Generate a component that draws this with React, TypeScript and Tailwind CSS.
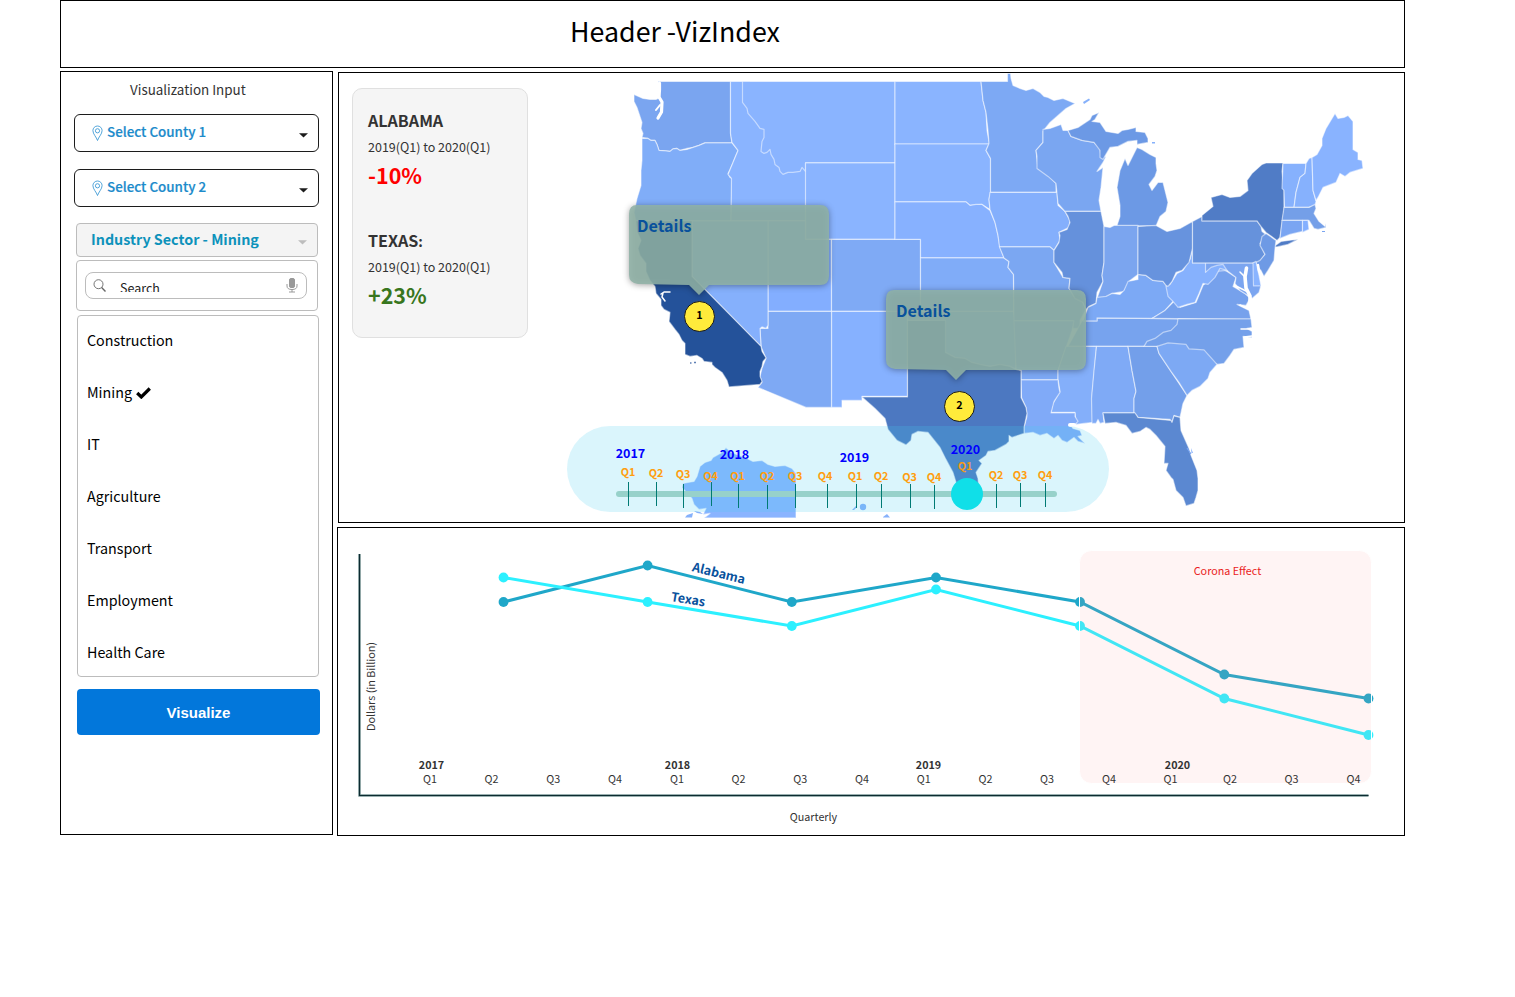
import React from 'react';

const FONT = "font-['Noto_Sans_CJK_SC','Noto_Sans',sans-serif]";

type Region = { id: string; fill: string; d: string };

const REGIONS: Region[] = [
  { id: 'WA', fill: '#7aa5f0', d: 'M658 81H730.500V133L732 142.500H705L699 145L693 147L687 148L680 150L677 148L673 148.500L670 151L666 150.500L659 150L657 144L655 140L651 140L648 138L642 137L643 133L641 128L642 122L639 113L637 107L634 101V94L643 98L650 99L656 99L660 97Z' },
  { id: 'OR', fill: '#80adf8', d: 'M642 138L648 138L651 140L655 140L657 144L659 150L666 150.500L670 151L673 148.500L677 148L680 150L687 149L693 147L699 145L705 142.500H732L738 150L735 157L733 162L730 169L728 173L730 177L732 178L731 220.500H636L634 212L637 198L641 185L641 170L642 160Z' },
  { id: 'ID', fill: '#8ab4ff', d: 'M730.500 81H750V100L790 150L806 162V220.500H731L731.500 178L728 174L733 162L738 150L732 142L730.500 133Z' },
  { id: 'MT', fill: '#8ab4ff', d: 'M742.500 81H895V162.500H805.500V171L802 167L800 171L793 172L788 172L783 174L780 171L779 167L775 164L774 159L771 154L770 149L767 152L764 153L761 151L762 141L764 137L764 129L760 128L755 121L748 113L747 108L742.500 102Z' },
  { id: 'WY', fill: '#8ab4ff', d: 'M805.500 162.500H895V239H805.500Z' },
  { id: 'UT', fill: '#83aeff', d: 'M768 220.500H805.500V239H831.500V311H768Z' },
  { id: 'CO', fill: '#7faaf5', d: 'M831.500 239H920.500V311H831.500Z' },
  { id: 'NM', fill: '#86b1ff', d: 'M831.500 311H907.500V396H862V400H842V407H831.500Z' },
  { id: 'AZ', fill: '#7ea9f4', d: 'M768 311H831.500V407H806L758 387L762 382L760 376L762 368L766 358L761 346L760 328H768Z' },
  { id: 'NV', fill: '#85b0fc', d: 'M692 220.500H768V325L766 328L762 326.500L760 328L761 346L692 276Z' },
  { id: 'CA', fill: '#24529a', d: 'M636 220.500H692V276L761 346L762 351L766 357.500L763 361L762 366L760 371V376L762 381L760 384L729 386.500L727 380L722 372L715 367L712 364V362L704 361L702 358L697 355L690 356L685 354V343L682 340L679 334L675 329L669 321L670 312L664 309L661 305V299L656 293L655 286L650 280L646 271V263L640 255L638 248L641 240L637 231Z' },
  { id: 'ND', fill: '#8ab4ff', d: 'M895 81H981L983 100L986 112L987 130L989.500 144H895Z' },
  { id: 'SD', fill: '#8ab4ff', d: 'M895 143.500H989L986 150L990.500 158V192L989 199L990 209L982 204L970 205L966 201.500H895Z' },
  { id: 'NE', fill: '#87b1ff', d: 'M895 201.500H966L970 205L976 204L982 204L990 210L995 222L998 235L1000 247L1004 257.500H920.500V239H895Z' },
  { id: 'KS', fill: '#80acf8', d: 'M920.500 257.500H1004L1009 261L1008 267L1013.500 274V311H920.500Z' },
  { id: 'OK', fill: '#82aefb', d: 'M907.500 311H1013.500L1016 330V372H930V320H907.500Z' },
  { id: 'MN', fill: '#7da9f4', d: 'M981 81H1007.500V73H1010.500L1011 78L1013 85L1020 88L1026 90L1033 88L1040 92L1044 96L1048 97L1054 100L1063 98L1075 103L1066 108L1058 115L1050 122L1046 127L1043 131V142L1036 150L1038 168L1048 175L1056 183V192H990.500V158L986 150L989 143L988 130L986 112L983 100Z' },
  { id: 'IA', fill: '#84affc', d: 'M990 192H1057L1058 205L1065 211L1070 220L1069 227L1059 232L1060 240L1054 250L1050 246.500H999.500L998 235L995 222L990 209L989 199Z' },
  { id: 'MO', fill: '#7ba7f2', d: 'M999.500 246.500H1050L1054 250V262L1063 277L1070 278L1069 288L1083 302L1086 309L1080 320V328H1073V320.500H1014L1013.500 274L1008 267L1009 261L1004 257.500Z' },
  { id: 'AR', fill: '#7da9f5', d: 'M1014 320.500H1074L1072 330L1065 350L1058 370V379.500H1021V370L1016 369Z' },
  { id: 'WI', fill: '#7aa6f1', d: 'M1043 129L1050 128L1061 124L1063 130L1068 130L1071 136L1082 140L1094 142L1100 148L1101 157L1106 156L1103 162L1097 171L1103 167L1101 187L1099 200L1101 211H1065L1058 203L1056 183L1048 176L1037 168V156L1036 150L1043 142Z' },
  { id: 'IL', fill: '#6591dc', d: 'M1065 211H1101L1104 226V262L1102 275L1103 281L1097 292L1096 303L1089 306L1086 309L1083 302L1075 298L1069 288L1070 278L1063 277L1062 272L1054 262V250L1059 242L1060 235L1059 232L1067 229L1070 222L1068 216Z' },
  { id: 'UP', fill: '#6c99e5', d: 'M1068 130L1078 127L1090 119L1092 115L1099 112L1095 119L1092 121L1100 122L1106 131L1118 133L1122 130L1128 129L1136 127V131L1145 132L1148 138L1148 142L1137 144L1137 140L1128 141L1118 146L1110 147L1103 159L1100 157L1100 150L1094 142L1082 140L1071 136Z' },
  { id: 'MI', fill: '#6c99e5', d: 'M1117 225L1120 216L1120 205L1117 187L1120 170L1125 158L1128 165L1132 157L1137 147L1142 149L1150 154L1156 157L1156 163L1157 170L1155 176L1149 184L1152 190L1158 182L1163 182L1165 190L1168 202L1166 211L1160 216L1156 225.500H1114Z' },
  { id: 'IN', fill: '#7ba5ef', d: 'M1104 226L1110 227L1114 225H1138V274L1130 280L1124 291L1112 293L1106 297L1097 298L1103 281L1102 275L1104 262Z' },
  { id: 'TN', fill: '#77a3ee', d: 'M1082 320.500H1097V317.500L1178 318.500L1185 330L1144 346H1068Z' },
  { id: 'KY', fill: '#7ca9f5', d: 'M1138 274L1146 275L1153 280L1163 281L1167 286L1173 301L1165 310L1152 318L1097 317.500V320.500H1083L1088 307L1096 303L1097 297L1106 296L1112 293L1120 294L1124 290L1128 281L1138 279Z' },
  { id: 'MS', fill: '#84affa', d: 'M1066 346H1096.500L1092 395L1092.500 422L1084 423L1076 424L1075 412H1051L1053 403L1060 391L1058 379V370Z' },
  { id: 'LA', fill: '#80aaf8', d: 'M1021 379.500H1058L1059 388L1060 392L1054 401L1051 412.500H1075V416L1078 421L1075 424L1070 424L1073 428L1080 430L1082 435L1078 436L1085 443L1078 441L1074 437L1067 442L1062 440L1058 435L1054 438L1047 433L1040 435L1033 432L1024 433L1024 427L1027 416L1026 407L1021.500 397Z' },
  { id: 'AL', fill: '#7faaf6', d: 'M1096.500 346H1128L1132 370L1136 391L1134 398V412.500H1103L1104 422L1100 423L1098 419L1096 423L1092 423L1091.500 398L1094 370Z' },
  { id: 'GA', fill: '#739fea', d: 'M1128 346H1157L1159 353L1187 395L1183 403L1180 417L1174 415L1172 422L1170 419L1138 417L1134 412L1134 398L1136 391L1132 370Z' },
  { id: 'VA', fill: '#76a1ec', d: 'M1220 267L1227 271L1236 277L1233 286L1245 293L1250 298L1246 305L1237 304L1249 310L1251 319L1152 318L1165 310L1174 301L1180 307L1196 302L1203 285L1213 277Z' },
  { id: 'NC', fill: '#74a0ea', d: 'M1178 318.500H1251L1252 327L1247 328L1252 331V337L1243 336L1244 347L1234 349L1230 355L1224 363L1217 364L1190 352L1157 346H1144L1147 341L1155 338L1163 332L1171 330L1177 324Z' },
  { id: 'SC', fill: '#7da9f4', d: 'M1157 346L1168 342.500L1186 344L1189 348.500L1204 349.500L1217 364L1210 372L1208 378L1200 386L1192 390L1187 395L1179 382L1171 371L1159 353Z' },
  { id: 'FL', fill: '#5b88d1', d: 'M1103 412.500H1135L1138 417L1171 420L1172 422L1174 415.500L1180 417L1181 430L1189 448L1191 455L1197 470L1198 478L1198 490L1196 497L1194 503L1186 505.500L1183 497L1176 490L1173 479L1171 477L1166 470L1168 463L1164 463L1165 446L1156 435L1150 429L1146 427L1140 431L1132 433L1126 425L1116 422L1105 423Z' },
  { id: 'MD', fill: '#7ba5f0', d: 'M1205 262.500H1257L1254 285H1261L1259 292L1252 298L1248 295L1240 290L1235 283L1236 277L1227 270L1205 272Z' },
  { id: 'WV', fill: '#86b1fd', d: 'M1192.500 248V262.500H1205.500V272L1211 267L1217 265L1223 264L1227 270L1220 268L1215 277L1208 284L1203 283L1199 293L1195 302L1187 304L1178 307L1173 301L1168 296L1166 286L1170 284L1172 281L1177 273L1183 270L1190 259Z' },
  { id: 'OH', fill: '#6793de', d: 'M1138 226L1156 225L1167 231L1180 228L1192.500 221V248L1189 262L1182 270L1176 272L1172 281L1168 286L1166 285L1163 281L1153 280L1146 275L1138 274Z' },
  { id: 'PA', fill: '#6692dc', d: 'M1192.500 221L1202 216V220.500H1257L1261 226L1262 231L1266 234L1260 243L1265 254L1259 262.500H1192.500Z' },
  { id: 'NY', fill: '#507cc6', d: 'M1202 215L1213 206L1211 197L1222 194L1230 197L1240 196L1248 190L1247 180L1252 173L1262 164L1266 162.500H1283L1282 171L1284 190V210L1280 237L1277 240L1266 232L1261 226L1257 220.500H1202Z' },
  { id: 'LI', fill: '#507cc6', d: 'M1274 246L1281 241L1292 239.500L1298 239L1288 244L1277 246.500Z' },
  { id: 'NJ', fill: '#6e9ae5', d: 'M1266 233L1276 240L1275 248L1274 260L1268 270L1264 276L1261 270L1257 266L1256 262L1260 260L1265 254L1260 245L1262 236Z' },
  { id: 'VT', fill: '#86b1fd', d: 'M1283 163H1306L1305 173L1300 177L1296 192L1294 207H1284.500L1284 190L1282 188Z' },
  { id: 'NH', fill: '#86b1fd', d: 'M1306 163L1309 158L1312 157L1313 190L1316 201L1315 205L1309 207H1294L1296 192L1300 177L1305 173Z' },
  { id: 'ME', fill: '#89b3ff', d: 'M1312 157L1317 154L1322 145V138L1326 128L1335 113L1338 118L1344 117L1348 115L1353 121V149L1358 152V159L1362 160L1363 168L1350 172L1345 176L1340 173L1336 182L1323 187L1318 197L1316 200L1313 190Z' },
  { id: 'MA', fill: '#749fe8', d: 'M1284 207H1309L1315 204L1316 208L1314 213L1319 221L1325 226V223L1326 227L1318 229L1314 228L1309 220H1282Z' },
  { id: 'CT', fill: '#7aa5f2', d: 'M1282 220H1302.500V231L1290 234L1280 238Z' },
  { id: 'RI', fill: '#84b0ff', d: 'M1302.500 220H1308L1309 229L1302.500 232Z' },
  { id: 'DE', fill: '#8ab4ff', d: 'M1253 262.500L1256 261L1259 275L1261 285.500H1253.500Z' },
  { id: 'TX', fill: '#4c78c1', d: 'M907.500 320H945.500V352L955 357L965 358L972 362L980 364L990 366L1000 364L1010 366L1016 369L1021 370V397L1026 407L1027 413L1024 427V433L1012 437L1009 435V441L1006 444L995 450L988 451L986 455L979 460L982 463L976 472L978 478L979 492L963 492L957 485L953 472L946 459L940 447L932 437L928 432L918 431L912 434L911 440L906 444.500L897 440L888 429L885 418L875 408L862 396.500H907.500Z' },
  { id: 'AK', fill: '#8ab4ff', d: 'M683 483L688 482L694 481L697 476L700 466L705 462L711 460L713 457L722 452L726 447L731 452L745 457L753 461L762 460L768 464L775 466L785 465L792 468L796 473V517.500H704L710 513L703 514L706 508L699 509L694 504L692 498L682 487Z' },
];

const TICKS: [number, number, string, number, number][] = [
  // tick x, tick top, label, label x, label baseline
  [628.5, 482, 'Q1', 628, 476], [656.5, 482, 'Q2', 656, 477], [683.5, 484, 'Q3', 683, 478],
  [711.5, 482, 'Q4', 710.5, 479.500], [738.5, 484, 'Q1', 737.5, 479.500], [767.5, 485, 'Q2', 767, 480],
  [795.5, 484, 'Q3', 795, 480], [827.5, 484, 'Q4', 825, 480], [856.5, 484, 'Q1', 855, 480],
  [881.5, 484, 'Q2', 881, 480], [910.5, 484, 'Q3', 909.5, 481], [934.5, 485, 'Q4', 934, 481],
  [996.5, 484, 'Q2', 996, 479], [1020.5, 483, 'Q3', 1020, 479], [1045.5, 483, 'Q4', 1045, 479],
];

const YEARS: [number, number, string][] = [[630.5, 458, '2017'], [734.5, 459, '2018'], [854.5, 462, '2019'], [965.5, 454, '2020']];

function UsMap() {
  return (
    <svg className="block h-[449px] w-[1065px]" viewBox="339 73 1065 449">
      <g stroke="#ffffff" strokeOpacity="0.5" strokeWidth="1.2" strokeLinejoin="round" transform="translate(0 0.400)">
        {REGIONS.map((r) => <path key={r.id} d={r.d} fill={r.fill} />)}
      </g>
      <g fill="none" stroke="#fff" strokeLinecap="round" strokeLinejoin="round">
        <path d="M659.500 83V90L659 97L662 102L661.500 112L658 118" strokeWidth="3.200" />
        <path d="M656 88V90M656 110L660 105" strokeWidth="2" />
        <path d="M661 294L664 292H670M663 293L662 297L665 301" strokeWidth="1.500" />
        <path d="M1246.500 268L1245 277L1246 288L1250 296V306" strokeWidth="3.600" />
        <path d="M1240 272L1246 278M1236 286L1246 291M1240 305L1249 309" strokeWidth="1.500" />
        <path d="M1258 265L1259 271L1263 278" strokeWidth="2.500" />
        <path d="M1241 329H1250M1244 337L1252 336" strokeWidth="1.500" />
        <path d="M1070 425H1074" strokeWidth="4" />
      </g>
      <g fill="#86b1fb">
        <path d="M685 517.500L687 515L693 513L692 517.500ZM694 511L700 512L703 514L697 513Z" />
        <circle cx="863" cy="507" r="3.200" />
        <path d="M852 510L856 506L857 507L854 510ZM883 517L887 514L890 517.500H883Z" />
        <path d="M1083 102L1089 98.500L1090 100L1084 104ZM1152 142h3v1.500h-3ZM1191 448l2 5h-1.500Z" />
      </g>
      <path d="M690 363h1.500M694 362.500h2" stroke="#5f80b5" strokeWidth="1.500" />
      <path d="M1187 448L1191 454M1322 231.500h3" stroke="#7aa5f0" strokeWidth="1.200" />
    </svg>
  );
}

function Timeline() {
  return (
    <div className="absolute left-[228px] top-[353px] h-[86px] w-[542px] rounded-full bg-[rgba(70,205,240,0.2)]">
      <svg className="block h-[86px] w-[542px]" viewBox="567 426 542 86">
        <rect x="616" y="491" width="441" height="6" rx="3" fill="#97d1ca" />
        {TICKS.map(([x, y, label, lx, ly]) => (
          <g key={x}>
            <path d={`M${x} ${y}v24`} stroke="#007a74" strokeWidth="1" />
            <text x={lx} y={ly} textAnchor="middle" fontSize="10.800" fontWeight="700" fill="#ff9e0f">{label}</text>
          </g>
        ))}
        <text x="965" y="470" textAnchor="middle" fontSize="10.800" fontWeight="700" fill="#f39a1c">Q1</text>
        {YEARS.map(([x, y, label]) => (
          <text key={label} x={x} y={y} textAnchor="middle" fontSize="12.500" fontWeight="700" fill="#0000ff">{label}</text>
        ))}
        <circle cx="967" cy="494" r="16" fill="#10dfe8" />
      </svg>
    </div>
  );
}

function Callout({ place, textPad }: { place: string; textPad: string }) {
  return (
    <div className={`absolute h-[90px] w-[202px] ${place}`}>
      <svg className="absolute inset-0 drop-shadow-[0_1px_3px_rgba(0,0,0,0.4)]" width="202" height="90" viewBox="0 0 202 90">
        <path d="M9 0H192Q201 0 201 9V71Q201 80 192 80H81L71 90L61 80L10 79Q1 78 1 70V9Q1 0 9 0Z" fill="#90b2a6" fillOpacity="0.88" />
      </svg>
      <div className={`relative pt-[8px] text-[16.1px] font-bold leading-6 text-[#08519c] ${textPad}`}>Details</div>
    </div>
  );
}

function Pin({ n, place }: { n: number; place: string }) {
  return (
    <div className={`absolute flex h-[31px] w-[31px] items-center justify-center rounded-full border border-[#1a1a1a] bg-[#ffeb3b] pb-[3px] text-[10.8px] font-bold leading-none text-black ${place}`}>{n}</div>
  );
}

function StatCard() {
  return (
    <div className="absolute left-[13px] top-[15px] h-[250px] w-[176px] rounded-[10px] border border-[#e0e0e0] bg-[#f5f5f5] px-[15px] pt-[19px] text-[#333]">
      <div className="h-[120px]">
        <div className="text-[16.1px] font-bold leading-6">ALABAMA</div>
        <div className="pt-[5px] text-[12.5px] leading-5">2019(Q1) to 2020(Q1)</div>
        <div className="pt-[2px] text-[21.5px] font-bold leading-8 text-[#ff0000]">-10%</div>
      </div>
      <div className="text-[16.1px] font-bold leading-6">TEXAS<span className="text-[14px]">:</span></div>
      <div className="pt-[4px] text-[12.5px] leading-5">2019(Q1) to 2020(Q1)</div>
      <div className="pt-[2px] text-[21.5px] font-bold leading-8 text-[#38761d]">+23%</div>
    </div>
  );
}

const XS = [503.5, 647.6, 791.8, 936, 1080, 1224.3, 1368.5];
const ALABAMA = [602, 565.5, 602, 577.5, 602, 674.5, 698.5];
const TEXAS = [577.5, 602, 626, 589.5, 626, 698.5, 735];
const QUARTERS = [430, 491.5, 553.3, 615, 677, 738.5, 800.3, 862, 923.7, 985.5, 1047, 1109, 1170.5, 1230, 1291.5, 1353.5];
const CHART_YEARS: [number, string][] = [[431.5, '2017'], [677.5, '2018'], [928.5, '2019'], [1177.5, '2020']];

function Series({ ys, color }: { ys: number[]; color: string }) {
  return (
    <g fill={color}>
      <polyline points={XS.map((x, i) => `${x},${ys[i]}`).join(' ')} fill="none" stroke={color} strokeWidth="3" />
      {XS.map((x, i) => <circle key={x} cx={x} cy={ys[i]} r="4.900" />)}
    </g>
  );
}

function Chart() {
  return (
    <svg className="block h-[307px] w-[1066px]" viewBox="338 528 1066 307">
      <path d="M359.500 554V795.500H1368.500" fill="none" stroke="#789696" strokeWidth="2.400" />
      <path d="M359.500 554V795.500H1368.500" fill="none" stroke="#0c2b30" strokeWidth="1.200" />
      <Series ys={ALABAMA} color="#1fa7c9" />
      <Series ys={TEXAS} color="#2cf0ff" />
      <rect x="1079.500" y="550.500" width="292" height="233" rx="12" fill="#ff9595" fillOpacity="0.1" stroke="#fff" strokeWidth="1" />
      <g fontSize="10.750" fill="#333" textAnchor="middle">
        {QUARTERS.map((x, i) => <text key={x} x={x} y="783">{`Q${(i % 4) + 1}`}</text>)}
        {CHART_YEARS.map(([x, y]) => <text key={y} x={x} y="769" fontWeight="700">{y}</text>)}
        <text x="813.500" y="821">Quarterly</text>
        <text transform="translate(375 686.500) rotate(-90)">Dollars (in Billion)</text>
        <text x="1227.500" y="575" fill="#ea1c1c">Corona Effect</text>
      </g>
      <g fontSize="12.500" fontWeight="700" fill="#08519c">
        <text transform="translate(691.500 571) rotate(14)">Alabama</text>
        <text transform="translate(670.500 601) rotate(9)">Texas</text>
      </g>
    </svg>
  );
}

function Caret({ className }: { className: string }) {
  return <svg width="9" height="5" viewBox="0 0 9 5" className={className}><path d="M0 .3H9L4.500 4.600Z" fill="currentColor" /></svg>;
}

function CountySelect({ label }: { label: string }) {
  return (
    <div className="flex h-[38px] w-[245px] items-center rounded-[6px] border border-[#1c1c1c] pl-[17px] pr-[10px] text-[#2a8fd0]">
      <svg width="11" height="17" viewBox="0 0 11 17" fill="none" stroke="currentColor" strokeWidth="0.8">
        <path d="M5.500 15.500C4.500 12.200 .9 9 .9 5.600A4.600 4.600 0 0 1 10.100 5.600C10.100 9 6.500 12.200 5.500 15.500Z" />
        <circle cx="5.500" cy="5.800" r="2.100" />
      </svg>
      <span className="ml-[4px] pb-[5px] text-[13.4px] font-medium leading-5 text-[#1c8bcb] [-webkit-text-stroke:0.2px_#1c8bcb]">{label}</span>
      <Caret className="ml-auto mt-[4px] text-[#1c1c1c]" />
    </div>
  );
}

const SECTORS = ['Construction', 'Mining', 'IT', 'Agriculture', 'Transport', 'Employment', 'Health Care'];

function Sidebar() {
  return (
    <aside className="h-[764px] w-[273px] border border-black">
      <h2 className="pl-[69px] pt-[7px] text-[13.4px] leading-5 text-[#333]">Visualization Input</h2>
      <div className="ml-[13px] mt-[15px] flex flex-col gap-[17px]">
        <CountySelect label="Select County 1" />
        <CountySelect label="Select County 2" />
      </div>
      <div className="ml-[15px] mt-[16px] flex h-[34px] w-[242px] items-center justify-between rounded-[4px] border border-[#bcbcbc] bg-[#f4f4f4] pl-[14px] pr-[10px]">
        <span className="pb-[2px] text-[14.3px] font-bold leading-5 text-[#0d92bb]">Industry Sector - Mining</span>
        <Caret className="mt-[4px] text-[#bdbdbd]" />
      </div>
      <div className="ml-[15px] mt-[3px] h-[51px] w-[242px] rounded-[4px] border border-[#bcbcbc] px-[8px] pt-[11px]">
        <div className="flex h-[27px] w-[222px] items-start rounded-[8px] border border-[#bcbcbc] px-[7px] pt-[6px]">
          <svg width="14" height="14" viewBox="0 0 14 14" fill="none" stroke="#666" strokeWidth="0.9">
            <circle cx="5.500" cy="5.200" r="4.500" /><path d="M8.600 8.600L12.500 12.500" strokeWidth="1.400" />
          </svg>
          <div className="ml-[13px] h-[13px] flex-1 overflow-hidden"><div className="text-[12.5px] leading-[18px] text-[#222]">Search</div></div>
          <svg width="12" height="15" viewBox="0 0 12 15" className="-mt-px mr-px" fill="none" stroke="#999" strokeWidth="1">
            <rect x="3.500" y="0.500" width="5" height="9" rx="1.500" fill="#999" />
            <path d="M1 6V8Q1 11.500 6 11.500Q11 11.500 11 8V6M6 11.500V14M3 14H9" />
          </svg>
        </div>
      </div>
      <ul className="ml-[16px] mt-[4px] h-[362px] w-[242px] rounded-[4px] border border-[#bcbcbc] pl-[9px] text-[14.3px] text-black">
        {SECTORS.map((s) => (
          <li key={s} className="flex h-[52px] items-center gap-[4px] pb-[4px]">
            {s}
            {s === 'Mining' && (
              <svg width="15" height="12" viewBox="0 0 15 12" className="mt-px"><path d="M1.200 6L5.300 10L13.800 1.500" fill="none" stroke="#000" strokeWidth="3.200" /></svg>
            )}
          </li>
        ))}
      </ul>
      <button className="ml-[16px] mt-[12px] block h-[46px] w-[243px] rounded-[4px] bg-[#0277db] pt-[2px] font-['Liberation_Sans',sans-serif] text-[15px] font-bold text-white">Visualize</button>
    </aside>
  );
}

export default function App() {
  return (
    <div className={`h-[997px] w-[1515px] overflow-hidden bg-white pl-[60px] ${FONT}`}>
      <header className="h-[68px] w-[1345px] border border-black pl-[509px] pt-[10px]">
        <h1 className="text-[26.8px] leading-[40px] text-black">Header -VizIndex</h1>
      </header>
      <div className="flex gap-[4px] pt-[3px]">
        <Sidebar />
        <main className="flex w-[1068px] flex-col items-end gap-[4px] pt-px">
          <section className="relative h-[451px] w-[1067px] border border-black">
            <UsMap />
            <StatCard />
            <Pin n={1} place="left-[345px] top-[227.5px]" />
            <Pin n={2} place="left-[605px] top-[317.5px]" />
            <Timeline />
            <Callout place="left-[289px] top-[132px]" textPad="pl-[9px]" />
            <Callout place="left-[546px] top-[217px]" textPad="pl-[11px]" />
          </section>
          <section className="h-[309px] w-[1068px] border border-black"><Chart /></section>
        </main>
      </div>
    </div>
  );
}
